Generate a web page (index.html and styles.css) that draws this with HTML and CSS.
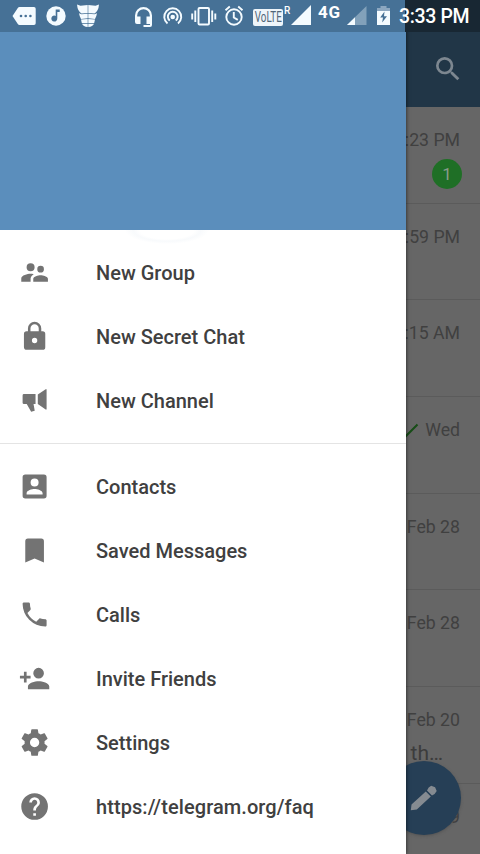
FILE: index.html
```html
<!DOCTYPE html>
<html lang="en">
<head>
<meta charset="utf-8">
<title>Telegram</title>
<link rel="stylesheet" href="styles.css">
</head>
<body>
<div class="screen">
  <main class="chats">
    <header class="toolbar">
      <svg class="search" viewBox="0 0 24 24"><path d="M15.5 14h-.79l-.28-.27A6.47 6.47 0 0 0 16 9.5 6.5 6.5 0 1 0 9.5 16c1.61 0 3.09-.59 4.23-1.57l.27.28v.79l5 4.99L20.49 19l-4.99-5zm-6 0a4.5 4.5 0 1 1 0-9 4.5 4.5 0 0 1 0 9z"/></svg>
    </header>
    <section class="chat"><time>5:23 PM</time><span class="badge">1</span></section>
    <section class="chat"><time>4:59 PM</time></section>
    <section class="chat"><time>9:15 AM</time></section>
    <section class="chat"><div class="sent"><svg class="tick" viewBox="0 0 20 16"><path d="M1 9l5 5L18.500 1.500"/></svg><time>Wed</time></div></section>
    <section class="chat"><time>Feb 28</time></section>
    <section class="chat"><time>Feb 28</time></section>
    <section class="chat"><time>Feb 20</time><span class="preview">th…</span></section>
    <section class="chat"><time>Feb 19</time></section>
    <div class="fab"><svg viewBox="0 0 30 30"><path d="M2.500 21.500L1.800 27.300l6-.7L21.800 13.500l-5-5zM18 7.400l5 5q3.500-1.500 4.700-4.400l-1.600-3.800-3.900-1.400q-2.900 1.300-4.200 4.600z"/></svg></div>
  </main>

  <nav class="drawer">
    <div class="profile"></div>
    <div class="halo"></div>
    <ul class="menu">
      <li><svg viewBox="0 0 24 24"><path d="M16.500 12a2.500 2.500 0 1 0 0-5 2.500 2.500 0 0 0 0 5zM9 11a3 3 0 1 0 0-6 3 3 0 0 0 0 6zm7.500 3c-1.830 0-5.500.92-5.500 2.750V19h11v-2.250c0-1.830-3.670-2.750-5.500-2.750zM9 13c-2.330 0-7 1.170-7 3.500V19h7v-2.250c0-.85.33-2.340 2.370-3.470C10.500 13.100 9.660 13 9 13z"/></svg><span>New Group</span></li>
      <li><svg viewBox="0 0 24 24"><path d="M18 8h-1V6A5 5 0 0 0 7 6v2H6a2 2 0 0 0-2 2v10c0 1.100.9 2 2 2h12a2 2 0 0 0 2-2V10a2 2 0 0 0-2-2zm-6 9a2 2 0 1 1 0-4 2 2 0 0 1 0 4zm3.100-9H8.900V6a3.100 3.100 0 0 1 6.200 0z"/></svg><span>New Secret Chat</span></li>
      <li><svg viewBox="0 0 24 24"><path d="M4 7.200h8.700v7.400h-1.500l.9 5-2.700.9L6.100 14.600H4a1 1 0 0 1-1-1V8.200a1 1 0 0 1 1-1zM14.400 7.500L20.300 3.500H21v15.200h-.7l-5.900-4z"/></svg><span>New Channel</span></li>
    </ul>
    <ul class="menu">
      <li><svg viewBox="0 0 24 24"><path d="M3 5v14a2 2 0 0 0 2 2h14a2 2 0 0 0 2-2V5a2 2 0 0 0-2-2H5a2 2 0 0 0-2 2zm12 4a3 3 0 1 1-6 0 3 3 0 0 1 6 0zm-9 8c0-2 4-3.100 6-3.100s6 1.100 6 3.100v1H6z"/></svg><span>Contacts</span></li>
      <li><svg viewBox="0 0 24 24"><path d="M17 3H7a2 2 0 0 0-2 2v16l7-3 7 3V5a2 2 0 0 0-2-2z"/></svg><span>Saved Messages</span></li>
      <li><svg viewBox="0 0 24 24"><path d="M6.620 10.790a15.050 15.050 0 0 0 6.590 6.590l2.200-2.200c.27-.27.67-.36 1.020-.24 1.120.37 2.330.57 3.570.57.55 0 1 .45 1 1V20c0 .55-.45 1-1 1A17 17 0 0 1 3 4c0-.55.45-1 1-1h3.500c.55 0 1 .45 1 1 0 1.250.2 2.450.57 3.570.11.35.03.74-.25 1.020z"/></svg><span>Calls</span></li>
      <li><svg viewBox="0 0 24 24"><path d="M15 12a4 4 0 1 0 0-8 4 4 0 0 0 0 8zm-9-2V7H4v3H1v2h3v3h2v-3h3v-2zm9 4c-2.670 0-8 1.340-8 4v2h16v-2c0-2.660-5.330-4-8-4z"/></svg><span>Invite Friends</span></li>
      <li><svg viewBox="0 0 24 24"><path d="M19.430 12.980c.04-.32.07-.64.07-.98s-.03-.66-.07-.98l2.110-1.650c.19-.15.24-.42.12-.64l-2-3.460c-.12-.22-.39-.3-.61-.22l-2.490 1c-.52-.4-1.080-.73-1.690-.98l-.38-2.650A.488.488 0 0 0 14 2h-4c-.25 0-.46.18-.49.42l-.38 2.650c-.61.25-1.170.59-1.690.98l-2.490-1c-.23-.09-.49 0-.61.22l-2 3.460c-.13.22-.07.49.12.64l2.110 1.650c-.04.32-.07.65-.07.98s.03.66.07.98l-2.110 1.650c-.19.15-.24.42-.12.64l2 3.460c.12.22.39.3.61.22l2.490-1c.52.4 1.080.73 1.690.98l.38 2.650c.03.24.24.42.49.42h4c.25 0 .46-.18.49-.42l.38-2.650c.61-.25 1.170-.59 1.690-.98l2.490 1c.23.09.49 0 .61-.22l2-3.460c.12-.22.07-.49-.12-.64zM12 15.500a3.500 3.500 0 1 1 0-7 3.500 3.500 0 0 1 0 7z"/></svg><span>Settings</span></li>
      <li><svg viewBox="0 0 24 24"><path d="M12 2a10 10 0 1 0 0 20 10 10 0 0 0 0-20zm1 17h-2v-2h2zm2.070-7.750l-.9.920C13.450 12.900 13 13.500 13 15h-2v-.5c0-1.100.45-2.100 1.170-2.830l1.240-1.260A2 2 0 1 0 10 9H8a4 4 0 1 1 8 0c0 .88-.36 1.680-.93 2.250z"/></svg><span class="link">https://telegram.org/faq</span></li>
    </ul>
  </nav>

  <div class="status">
    <svg class="s-notices" viewBox="0 0 120 32">
      <path d="M12.500 16l5.300-8q.6-1 1.800-1H34q1.700 0 1.700 1.700v14.600Q35.700 25 34 25H19.600q-1.200 0-1.800-1z"/>
      <g class="ink"><circle cx="21" cy="16" r="1.300"/><circle cx="25.700" cy="16" r="1.300"/><circle cx="30.400" cy="16" r="1.300"/></g>
      <circle cx="56" cy="16" r="9.700"/>
      <path class="ink" d="M55.700 9.500h4v2.500h-2.400v6.300a3 3 0 1 1-1.600-2.400z"/>
      <path d="M77 4.500l3.500 1.300 7.200-.8v8l-6.200.5q-4-2.500-4.500-9zM99 4.500l-3.500 1.300-7.200-.8v8l6.200.5q4-2.500 4.500-9zM79 13.200l2.500 1.100 6.200-.6v4.600l-6.700.6q-1.500-2.500-2-5.700zM97 13.200l-2.500 1.100-6.200-.6v4.600l6.700.6q1.500-2.500 2-5.700zM81 19.600l6.700-.6v4h-5.900zM95 19.600l-6.700-.6v4h5.900zM82 23.700h5.700V27q-4.500-.2-5.700-3.300zM94 23.700h-5.700V27q4.500-.2 5.700-3.300z"/>
    </svg>
    <svg class="s-system" viewBox="130 0 121 32">
      <path d="M135 15.500a8.500 8.500 0 0 1 17 0V25q0 2-2 2h-6.500v-2h6.500v-1h-3.500v-7.500h3.300v-1a6.300 6.300 0 0 0-12.600 0v1h3.300V24h-3.500q-2 0-2-2z"/>
      <g class="line"><path d="M167.500 23.500a8.500 8.500 0 1 1 10.500 0M169.800 20.500a4.900 4.900 0 1 1 5.900 0"/><rect x="198.500" y="8" width="10.500" height="16.500" rx="1"/><path d="M195.300 10.500v11.500M192.200 13.500v6M212.200 10.500v11.500M215.300 13.500v6"/><circle cx="234" cy="17" r="7.700"/><path d="M233.800 12v5.500l4 2.400M225.500 10.200l4.300-3.600M242.500 10.200l-4.300-3.600"/></g>
      <circle cx="172.700" cy="17" r="2.300"/>
    </svg>
    <span class="volte"><span>VoLTE</span></span><span class="roam">R</span>
    <svg class="s-signal" viewBox="290 0 24 32"><path d="M291 25L311 5v20z"/></svg>
    <span class="net">4G</span>
    <svg class="s-power" viewBox="345 0 50 32"><path opacity=".35" d="M347 25L366.500 6v19z"/><path d="M347 25l8-7.800V25z"/><path opacity=".4" d="M380.500 6h6v2h3.500v4h-13V8h3.500z"/><path d="M377 11h13v14h-13z"/><path class="ink" d="M384.500 11.500l-4.300 6h2.800l-.8 5 4.800-6.300h-3z"/></svg>
    <span class="clock">3:33 PM</span>
  </div>
</div>
</body>
</html>
```
FILE: styles.css
```css
* { box-sizing: border-box; }
body { margin: 0; font-family: Roboto, "Liberation Sans", sans-serif; }
svg { display: block; flex: none; }
.screen { position: relative; width: 480px; height: 854px; overflow: hidden; background: #666; }

.chats { height: 854px; overflow: hidden; color: #404040; }
.toolbar { height: 107px; padding: 53px 16px 0; display: flex; justify-content: flex-end; background: #213647; }
.search { width: 32px; height: 32px; fill: #7d8790; }
.chat { height: 96.700px; padding: 22px 20px 0; display: flex; flex-direction: column; align-items: flex-end; border-bottom: 1px solid #5b5b5b; font-size: 17.700px; line-height: 23px; }
.badge { width: 30px; height: 30px; margin: 7px -2px 0 0; border-radius: 50%; background: #1f6f26; color: #8a9a8b; text-align: center; font-size: 17px; line-height: 30px; }
.sent { display: flex; align-items: center; gap: 6px; }
.tick { width: 20px; height: 16px; fill: none; stroke: #174d17; stroke-width: 2; }
.preview { margin: 9px 17px 0 0; font-size: 21px; line-height: 24px; color: #3c3c3c; }
.fab { position: absolute; left: 387px; top: 761px; width: 74px; height: 74px; border-radius: 50%; background: #263f56; display: flex; align-items: center; justify-content: center; box-shadow: 0 1px 3px #4448; }
.fab svg { width: 30px; height: 30px; fill: #858b91; }

.drawer { position: absolute; left: 0; top: 0; width: 405.500px; height: 854px; background: #fff; box-shadow: 0 0 4px #000a; }
.profile { height: 229.500px; background: #5b8ebc; }
.halo { position: absolute; left: 125px; top: 229.500px; width: 84px; height: 14px; background: radial-gradient(ellipse 50% 100% at 50% 0, #fff 65%, #f8fafc 80%, #fff 100%); }
.menu { list-style: none; margin: 0; padding: 11px 0 10px; }
.menu + .menu { border-top: 1px solid #e4e4e4; }
.menu li { height: 64.100px; padding-left: 18px; display: flex; align-items: center; gap: 46px; color: #404040; font-size: 20px; font-weight: 500; line-height: 24px; white-space: nowrap; }
.menu svg { width: 32px; height: 32px; fill: #737373; transform: translate(.6px, -.5px); }
.menu .link { letter-spacing: .08px; }

.status { position: absolute; left: 0; top: 0; width: 480px; height: 32px; display: flex; align-items: flex-start; color: #fff; background: linear-gradient(90deg, #467196 405.500px, #182733 405.500px); }
.status svg { height: 32px; fill: #f4fbff; }
.status .ink { fill: #467196; }
.status .line { fill: none; stroke: #f4fbff; stroke-width: 1.900; }
.s-notices { width: 120px; }
.s-system { width: 121px; margin-left: 10px; }
.volte { flex: none; width: 30px; height: 17px; margin: 9px 0 0 2px; display: flex; justify-content: center; border-radius: 2px; background: #eef5fa; color: #506679; font-size: 14px; line-height: 17px; }
.volte span { transform: scaleX(.7); }
.roam { flex: none; width: 7px; margin-top: 5px; padding-left: 1px; font-size: 10px; font-weight: 500; line-height: 11px; }
.s-signal { width: 24px; }
.net { flex: none; width: 31px; margin-top: 3px; padding-left: 4px; font-size: 17px; font-weight: 700; line-height: 18px; letter-spacing: .7px; }
.s-power { width: 50px; }
.clock { flex: none; margin: 5px 0 0 4px; font-size: 19.500px; font-weight: 500; line-height: 23px; letter-spacing: -.35px; white-space: nowrap; }
```
